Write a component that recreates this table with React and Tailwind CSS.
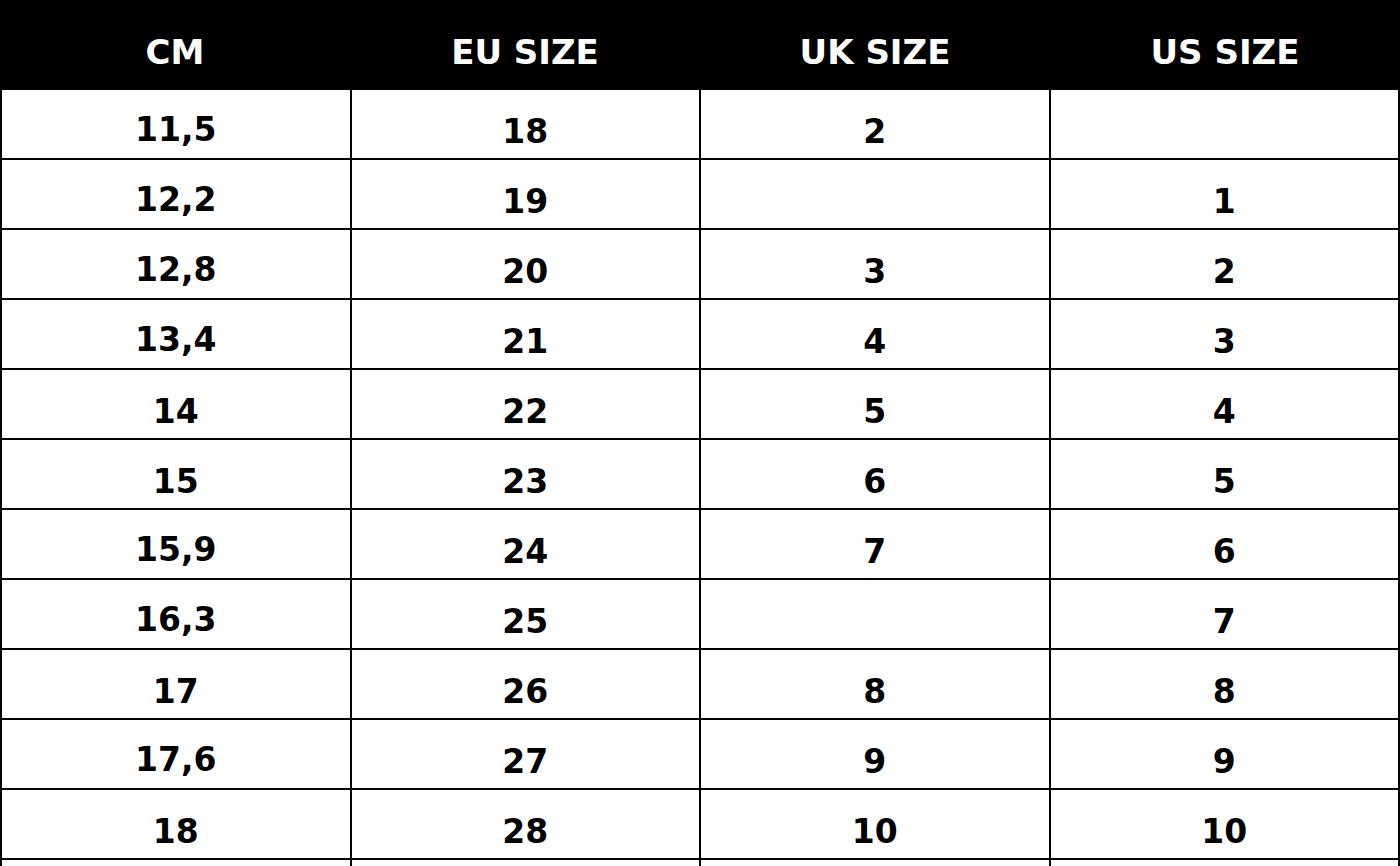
const ROWS = [
  ['11,5', '18', '2', ''],
  ['12,2', '19', '', '1'],
  ['12,8', '20', '3', '2'],
  ['13,4', '21', '4', '3'],
  ['14', '22', '5', '4'],
  ['15', '23', '6', '5'],
  ['15,9', '24', '7', '6'],
  ['16,3', '25', '', '7'],
  ['17', '26', '8', '8'],
  ['17,6', '27', '9', '9'],
  ['18', '28', '10', '10'],
  ['', '', '', ''],
]

const HEAD = ['CM', 'EU SIZE', 'UK SIZE', 'US SIZE']

export default function App() {
  return (
    <div className="w-[1400px] h-[866px] overflow-hidden bg-white" style={{ fontFamily: '"DejaVu Sans", sans-serif' }}>
      <div className="grid grid-cols-4 h-[90px] bg-black">
        {HEAD.map(h => (
          <div key={h} className="flex items-center justify-center pt-[14px] text-[34px] font-bold text-white">{h}</div>
        ))}
      </div>
      <div className="grid grid-cols-4 gap-[2px] px-[2px] bg-black">
        {ROWS.map((r, i) => r.map((c, j) => (
          <div key={i + '-' + j} className={`bg-white h-[68px] flex items-center justify-center text-[33px] font-bold text-black ${c.includes(',') ? 'pt-[12px]' : 'pt-[15px]'}`}>{c}</div>
        )))}
      </div>
    </div>
  )
}
